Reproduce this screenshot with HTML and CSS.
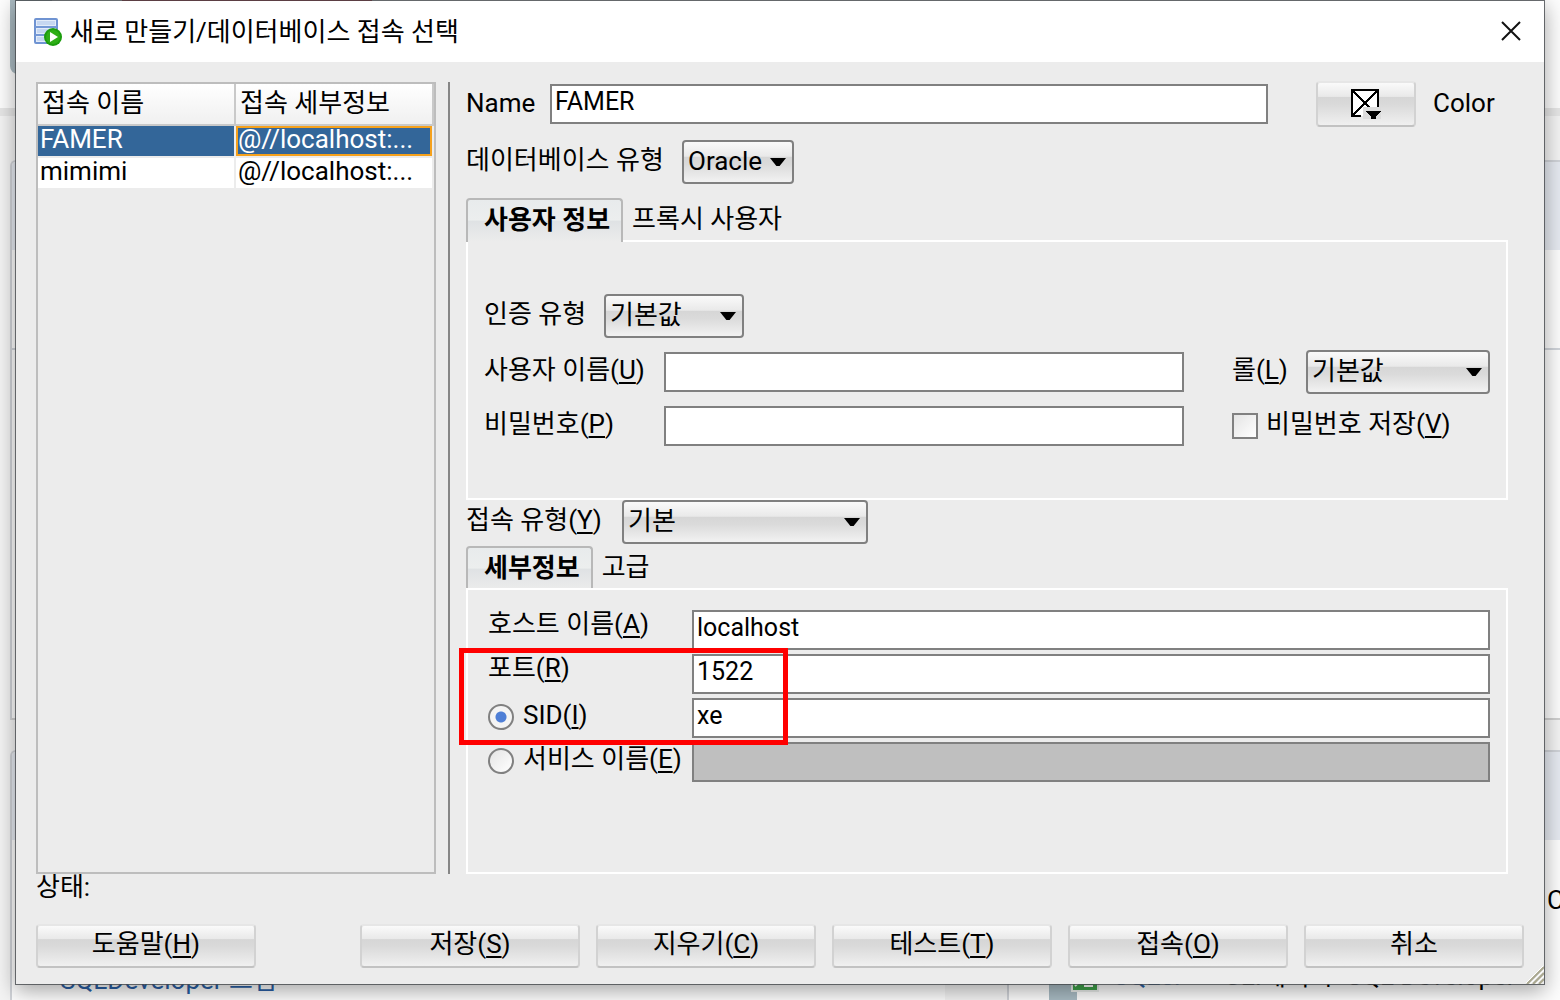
FILE: index.html
```html
<!DOCTYPE html>
<html lang="ko">
<head>
  <meta charset="UTF-8">
  <meta name="viewport" content="width=device-width, initial-scale=1.0">
  <title>새로 만들기/데이터베이스 접속 선택</title>
  <link rel="stylesheet" href="styles.css">
</head>
<body>
  <!-- start page behind the dialog -->
  <div class="backdrop">
    <div class="banner">
      <div class="banner-icon"></div>
      <div class="banner-logo"></div>
    </div>
    <div class="cards">
      <div class="card card-top"><div class="card-head"></div><div class="card-line"></div></div>
      <div class="card card-top"><div class="card-head"></div><div class="card-line"></div></div>
      <div class="card">
        <div class="card-head"></div>
        <p class="card-text first"><a href="#">SQLDeveloper 그림</a></p>
      </div>
      <div class="card">
        <div class="card-head"></div>
        <p class="card-more">C</p>
        <div class="card-text">
          <svg width="50" height="48" viewBox="0 0 50 48">
            <path d="M0 4h28v44H0z" fill="#a9bcc4"/>
            <path d="M0 25q14 9 28 4" fill="none" stroke="#6d8894" stroke-width="2"/>
            <path d="M22 12h28v28H22z" fill="#e8ecea"/>
            <path d="M24 12h24v26H24z" fill="#3fa24a"/>
            <path d="M26 34l7-7-7-6M35 34h9" fill="none" stroke="#fff" stroke-width="2"/>
          </svg>
          <a href="#">SQLcl</a> <span class="card-desc">- CLI에서 ㅣ SQL Developer으</span>
        </div>
      </div>
    </div>
  </div>

  <div class="dialog">
    <div class="titlebar">
      <svg class="app-icon" width="30" height="30" viewBox="0 0 30 30">
        <rect x="2" y="2" width="22" height="24" rx="1" fill="#e3ecf9" stroke="#6f93d2" stroke-width="2"/>
        <path d="M4 4h18v4H4zM4 12h18v4H4zM4 20h18v4H4z" fill="#c6d7f1"/>
        <path d="M2 10h22M2 18h22" stroke="#7599d6" stroke-width="2"/>
        <circle cx="20" cy="20" r="9" fill="#1b9d0d"/>
        <circle cx="20" cy="20" r="7" fill="#2fae16"/>
        <path d="M17 15l8 5-8 5z" fill="#fff"/>
      </svg>
      <span class="title">새로 만들기/데이터베이스 접속 선택</span>
      <button class="close" aria-label="닫기">
        <svg width="20" height="20" viewBox="0 0 20 20"><path d="M1 1l18 18M19 1L1 19" stroke="#111" stroke-width="2"/></svg>
      </button>
    </div>

    <div class="content">
      <div class="list">
        <table>
          <thead>
            <tr><th>접속 이름</th><th>접속 세부정보</th></tr>
          </thead>
          <tbody>
            <tr class="selected"><td>FAMER</td><td class="focused">@//localhost:...</td></tr>
            <tr><td>mimimi</td><td>@//localhost:...</td></tr>
          </tbody>
        </table>
      </div>

      <form class="form">
        <div class="row name-row">
          <label for="name">Name</label>
          <input type="text" id="name" value="FAMER">
          <button type="button" class="btn color-btn" id="color">
            <svg width="32" height="32" viewBox="0 0 32 32" shape-rendering="crispEdges">
              <path d="M2 2h26v26H2z" fill="#fff"/>
              <path d="M11 28H2V2h26v17" fill="none" stroke="#000" stroke-width="2"/>
              <path d="M3 3l22 22M27 3L3 27" stroke="#000" stroke-width="2"/>
              <path d="M13 19h18v12H13z" fill="#dcdcdc"/>
              <path d="M15 23h16l-5 6v2h-5v-2z" fill="#000"/>
            </svg>
          </button>
          <label for="color" class="color-label">Color</label>
        </div>

        <div class="row type-row">
          <label for="dbtype">데이터베이스 유형</label>
          <span class="combo combo-s"><select id="dbtype"><option>Oracle</option></select></span>
        </div>

        <div class="tabs">
          <button type="button" class="tab active">사용자 정보</button>
          <button type="button" class="tab">프록시 사용자</button>
        </div>
        <div class="panel user-panel">
          <div class="row">
            <label class="auth" for="auth">인증 유형</label>
            <span class="combo combo-m"><select id="auth"><option>기본값</option></select></span>
          </div>
          <div class="row">
            <label class="field" for="user">사용자 이름(<u>U</u>)</label>
            <input type="text" id="user">
            <div class="side">
              <label for="role">롤(<u>L</u>)</label>
              <span class="combo combo-l"><select id="role"><option>기본값</option></select></span>
            </div>
          </div>
          <div class="row">
            <label class="field" for="pass">비밀번호(<u>P</u>)</label>
            <input type="password" id="pass">
            <div class="side">
              <input type="checkbox" id="save">
              <label for="save">비밀번호 저장(<u>V</u>)</label>
            </div>
          </div>
        </div>

        <div class="row conn-row">
          <label for="conn">접속 유형(<u>Y</u>)</label>
          <span class="combo combo-xl"><select id="conn"><option>기본</option></select></span>
        </div>

        <div class="tabs">
          <button type="button" class="tab active">세부정보</button>
          <button type="button" class="tab">고급</button>
        </div>
        <div class="panel detail-panel">
          <div class="row">
            <label class="detail" for="host">호스트 이름(<u>A</u>)</label>
            <input type="text" id="host" value="localhost">
          </div>
          <div class="row">
            <label class="detail" for="port">포트(<u>R</u>)</label>
            <input type="text" id="port" value="1522">
          </div>
          <div class="row">
            <div class="detail">
              <input type="radio" name="target" id="sid" checked>
              <label for="sid">SID(<u>I</u>)</label>
            </div>
            <input type="text" value="xe" aria-label="SID">
          </div>
          <div class="row">
            <div class="detail">
              <input type="radio" name="target" id="service">
              <label for="service">서비스 이름(<u>E</u>)</label>
            </div>
            <input type="text" aria-label="서비스 이름" disabled>
          </div>
          <div class="highlight"></div>
        </div>
      </form>
    </div>

    <div class="status">상태:</div>
    <div class="buttons">
      <button class="btn help">도움말(<u>H</u>)</button>
      <button class="btn">저장(<u>S</u>)</button>
      <button class="btn">지우기(<u>C</u>)</button>
      <button class="btn">테스트(<u>T</u>)</button>
      <button class="btn">접속(<u>O</u>)</button>
      <button class="btn">취소</button>
    </div>
    <svg class="grip" width="18" height="18" viewBox="0 0 18 18">
      <path d="M1 18L18 1M7 18L18 7M13 18l5-5" stroke="#a9a78f" stroke-width="2"/>
      <path d="M-1 18L18 -1M4 18L18 4M10 18l8-8" stroke="#fff" stroke-width="1"/>
    </svg>
  </div>
</body>
</html>
```
FILE: styles.css
```css
* {
  box-sizing: border-box;
}
body {
  margin: 0;
  position: relative;
  min-height: 100vh;
  overflow: hidden;
  background: #f4f4f4;
  color: #000;
  font-family: Roboto, 'Noto Sans CJK KR', sans-serif;
  font-size: 26px;
  font-weight: 400;
  line-height: 32px;
}
input, select, button {
  font: inherit;
  color: inherit;
  margin: 0;
}
u {
  text-decoration-thickness: 2px;
  text-underline-offset: 3px;
}

/* page behind */
.backdrop {
  position: absolute;
  inset: 0;
  overflow: hidden;
}
.banner {
  display: flex;
  gap: 70px;
  height: 116px;
  padding-left: 10px;
  background: #fdfdfd;
  border-bottom: 8px solid #e6e6e6;
}
.banner-icon {
  width: 42px;
  height: 74px;
  border-radius: 0 0 0 8px;
  background: #a9b9c0;
}
.banner-logo {
  width: 250px;
  height: 20px;
  background: #c4161c;
}
.cards {
  display: grid;
  grid-template-columns: 935px 1fr;
  gap: 30px 62px;
  padding: 44px 0 0 10px;
}
.card {
  min-width: 0;
  border: 2px solid #d0d3d8;
  border-bottom: 0;
  border-right: 0;
  border-radius: 6px 0 0 0;
  background: #fdfdfd;
  overflow: hidden;
  height: 260px;
}
.card-top {
  height: 560px;
  border-bottom: 2px solid #d0d0d0;
}
.card-head {
  height: 88px;
  background: #e6eaf1;
}
.card-line {
  height: 100px;
  border-bottom: 2px solid #d0d4da;
}
.card-text {
  display: flex;
  align-items: center;
  gap: 14px;
  margin: 36px 0 0 40px;
  white-space: nowrap;
}
.card-text.first {
  margin: 124px 0 0 48px;
}
.card-text a {
  color: #2a5fa5;
  text-decoration: none;
}
.card-desc {
  margin-left: 16px;
}
.card-more {
  margin: 44px 0 0 538px;
}

/* dialog */
.dialog {
  position: relative;
  display: flex;
  flex-direction: column;
  height: calc(100vh - 15px);
  min-height: 900px;
  margin: 0 15px;
  border: 1px solid rgba(70, 74, 78, 0.8);
  background: #ececec;
  background-clip: padding-box;
  box-shadow: 0 6px 20px rgba(0, 0, 0, 0.35);
}
.titlebar {
  display: flex;
  align-items: center;
  height: 61px;
  padding: 0 23px 0 17px;
  background: #fff;
}
.title {
  flex: 1;
  margin-left: 7px;
}
.close {
  padding: 0 0 2px;
  border: 0;
  background: none;
  line-height: 0;
}
.content {
  flex: 1;
  display: flex;
  padding: 20px 36px 0 20px;
}
.list {
  width: 400px;
  border: 2px solid #bdbdbd;
}
table {
  width: 396px;
  table-layout: fixed;
  border-collapse: separate;
  border-spacing: 0;
}
th {
  height: 42px;
  padding: 0 4px 2px;
  border-right: 2px solid #c9c9c9;
  border-bottom: 2px solid #c9c9c9;
  background: linear-gradient(#fff, #f0f0f0);
  font-weight: 400;
  text-align: left;
}
td {
  height: 32px;
  padding: 0 2px 4px;
  border-right: 2px solid #ececec;
  border-bottom: 2px solid #ececec;
  background: #fff;
  background-clip: padding-box;
  line-height: 26px;
  white-space: nowrap;
}
.selected td {
  background-color: #336699;
  color: #fff;
}
.selected .focused {
  box-shadow: inset 0 0 0 2px #f5a11c;
}

.form {
  flex: 1;
  display: flex;
  flex-direction: column;
  margin-left: 12px;
  padding-left: 16px;
  border-left: 2px solid #868686;
}
.row {
  display: flex;
  align-items: center;
}
label {
  padding-bottom: 4px;
  white-space: nowrap;
}
input[type="text"], input[type="password"] {
  flex: 1;
  min-width: 0;
  height: 40px;
  padding: 0 3px 6px;
  border: 2px solid #808080;
  border-radius: 0;
  background: #fff;
  font-size: 25px;
  outline: none;
}
input[type="text"]:disabled {
  background: #bfbfbf;
}
.name-row {
  height: 44px;
  margin-bottom: 14px;
}
.name-row label {
  width: 84px;
  padding-bottom: 2px;
}
.name-row .color-label {
  width: 75px;
}
.type-row {
  margin-bottom: 14px;
}
.type-row label {
  width: 216px;
}
.conn-row {
  margin-bottom: 2px;
}
.conn-row label {
  width: 156px;
}

.combo {
  position: relative;
  flex: none;
}
.combo::after {
  content: "";
  position: absolute;
  right: 8px;
  top: 18px;
  width: 16px;
  height: 8px;
  background: #000;
  clip-path: polygon(0 0, 100% 0, 60% 100%, 40% 100%);
  pointer-events: none;
}
.combo select {
  display: block;
  width: 100%;
  height: 44px;
  padding: 0 4px 2px;
  border: 2px solid #808080;
  border-radius: 4px;
  background: linear-gradient(#fafafa, #e9e9e9 36%, #d6d6d6 37%, #dadada 55%, #f2f2f2);
  appearance: none;
  outline: none;
}
.combo-s { width: 112px; }
.combo-m { width: 140px; }
.combo-l { width: 184px; }
.combo-xl { width: 246px; }

.tabs {
  display: flex;
  height: 44px;
  margin-bottom: -2px;
}
.tab {
  padding: 0 9px 2px;
  border: 0;
  background: none;
}
.tab.active {
  position: relative;
  padding: 0 11px 2px 16px;
  border: 2px solid #b8b8b8;
  border-bottom: 0;
  border-radius: 4px 4px 0 0;
  background: linear-gradient(#e8ebec, #eceeee 48%, #dfe2e4 50%, #ececec);
  font-weight: 700;
}
.panel {
  border: 2px solid #fff;
}
.user-panel {
  display: flex;
  flex-direction: column;
  gap: 12px;
  padding: 52px 16px 52px 16px;
}
.auth {
  width: 120px;
}
.field {
  width: 180px;
}
.side {
  display: flex;
  align-items: center;
  justify-content: space-between;
  width: 258px;
  margin-left: 48px;
}
.side input + label {
  flex: 1;
  margin-left: 8px;
}
.user-panel .row:last-child {
  height: 40px;
}
.detail-panel {
  position: relative;
  flex: 1;
  display: flex;
  flex-direction: column;
  gap: 4px;
  padding: 20px 16px 0 20px;
}
.detail-panel .row {
  height: 40px;
}
.detail {
  display: flex;
  align-items: center;
  width: 204px;
  padding-bottom: 12px;
}
div.detail {
  padding-bottom: 2px;
}
.detail input + label {
  margin-left: 9px;
}

input[type="checkbox"], input[type="radio"] {
  appearance: none;
  flex: none;
  width: 26px;
  height: 26px;
  border: 2px solid #808080;
  background: linear-gradient(135deg, #e4e4e4, #fff);
}
input[type="radio"] {
  border-radius: 50%;
}
input[type="radio"]:checked {
  background: radial-gradient(circle, #4f7fd6 0 5px, #f4f4f4 6px);
}

/* red frame round port and SID */
.highlight {
  position: absolute;
  left: -9px;
  top: 58px;
  width: 329px;
  height: 97px;
  border: 5px solid #f00;
  pointer-events: none;
}

.status {
  height: 26px;
  margin: 0 20px 24px;
  line-height: 26px;
}
.buttons {
  display: flex;
  gap: 16px;
  padding: 0 20px 16px;
}
.btn {
  width: 220px;
  height: 44px;
  padding: 0 0 4px;
  border: 2px solid #d2d2d2;
  border-top-color: #e6e6e6;
  border-bottom-color: #c2c2c2;
  border-radius: 4px;
  background: linear-gradient(#fafafa, #e9e9e9 32%, #d6d6d6 34%, #dadada 52%, #f0f0f0);
}
.help {
  margin-right: auto;
}
.color-btn {
  width: 100px;
  height: 46px;
  margin: 0 17px 0 48px;
  padding: 0;
  line-height: 0;
}
.grip {
  position: absolute;
  right: 0;
  bottom: 0;
}
```
